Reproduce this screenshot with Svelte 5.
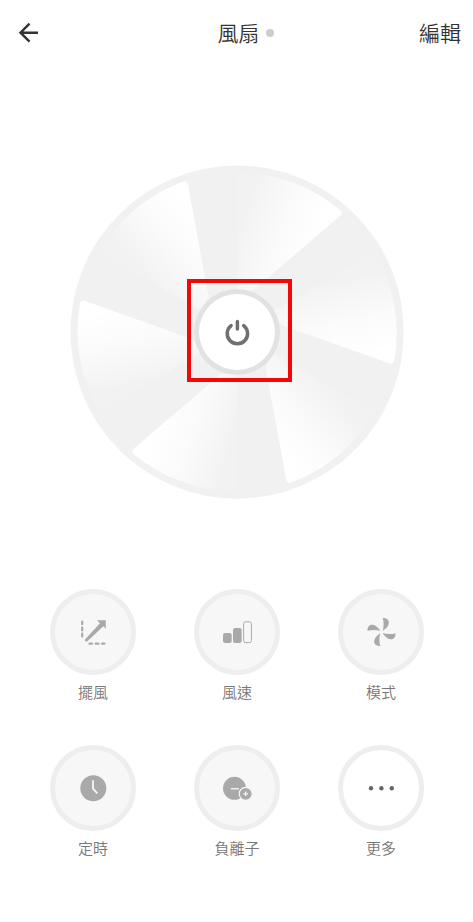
<script>
  const blades = [0, 60, 120, 180, 240, 300]

  const controls = [
    { id: 'swing', txt: '擺風' },
    { id: 'speed', txt: '風速' },
    { id: 'mode', txt: '模式' },
    { id: 'timer', txt: '定時' },
    { id: 'anion', txt: '負離子' },
    { id: 'more', txt: '更多' }
  ]
</script>


<div class="screen">
  <header>
    <button class="back" aria-label="返回">
      <svg width="24" height="24" viewBox="0 0 24 24" fill="none" stroke="#333" stroke-width="2.4">
        <path d="M22 12.700H4.500M13.500 3.700L4.500 12.700l9 9" />
      </svg>
    </button>
    <h1>風扇<span class="status"></span></h1>
    <button class="edit">編輯</button>
  </header>

  <main>
    <div class="fan">
      <svg class="disc" viewBox="-167 -167 334 334" aria-hidden="true">
        <defs>
          <linearGradient id="shine" gradientUnits="userSpaceOnUse" x1="0" y1="-100" x2="75" y2="-76">
            <stop offset="0" stop-color="#fff" stop-opacity="0.08" />
            <stop offset="0.55" stop-color="#fff" stop-opacity="0.7" />
            <stop offset="1" stop-color="#fff" />
          </linearGradient>
        </defs>
        <circle r="166.5" fill="#f1f1f1" />
        {#each blades as angle}
          <path transform="rotate({angle})" fill="url(#shine)"
            d="M0 -159A159 159 0 0 1 103 -122Q106 -120 104 -117L16 -42L0 -42Z" />
        {/each}
      </svg>
      <button class="power" aria-label="開關">
        <svg width="30" height="30" viewBox="0 0 30 30" fill="none" stroke="#707070" stroke-width="3.5" stroke-linecap="round">
          <path d="M15.400 4.500v7.500M9.100 8.600A10.200 10.200 0 1 0 21.700 8.600" />
        </svg>
      </button>
      <span class="highlight"></span>
    </div>

    <div class="controls">
      {#each controls as { id, txt }}
        <button class="control">
          <span class="ring" class:active={id === 'more'}>
            <svg width="36" height="36" viewBox="0 0 36 36" fill="#a9a9a9" aria-hidden="true">
              {#if id === 'swing'}
                <path d="M7.200 7.500v2.700M7.200 13.500v3M7.200 19.500v3M14.500 29.700h2.500M20.700 29.700h2.800M27.200 29.700h2.200" stroke="#a9a9a9" stroke-width="2.2" stroke-linecap="round" />
                <path d="M22 6.200h8.800v8.500l-2.500-2.500L12.400 27.200q-1.400.7-2.200-.2-.6-1.100.2-2L25 9.200z" />
              {:else if id === 'speed'}
                <rect x="4" y="19" width="8.7" height="10" rx="2.2" />
                <rect x="14" y="14" width="8.7" height="15" rx="2.2" />
                <rect x="24.6" y="7.8" width="7.8" height="20.8" rx="2" fill="none" stroke="#a9a9a9" />
              {:else if id === 'mode'}
                {#each [0, 90, 180, 270] as angle}
                  <path transform="rotate({angle} 18.5 18)" d="M19.700 4C24 3.800 26.200 6 25.800 9.200C25.300 12.800 22.500 14.700 19.800 17C20.800 12.500 21 8 19.700 4Z" />
                {/each}
              {:else if id === 'timer'}
                <circle cx="18.3" cy="18.3" r="13" />
                <path d="M18 10.300v8.400l4.400 4.700" fill="none" stroke="#f7f7f7" stroke-width="1.8" />
              {:else if id === 'anion'}
                <circle cx="15.5" cy="18.3" r="11.5" />
                <path d="M11.800 18.800h8.200" stroke="#f7f7f7" stroke-width="1.3" />
                <circle cx="26.7" cy="23.8" r="6.5" stroke="#f7f7f7" stroke-width="1.2" />
                <path d="M24.400 23.800h4.600M26.700 21.500v4.600" stroke="#f7f7f7" stroke-width="1.3" />
              {:else}
                <g fill="#666">
                  <circle cx="8" cy="18.3" r="2.2" />
                  <circle cx="18.4" cy="18.3" r="2.2" />
                  <circle cx="28.8" cy="18.3" r="2.2" />
                </g>
              {/if}
            </svg>
          </span>
          {txt}
        </button>
      {/each}
    </div>
  </main>
</div>


<style>

  :global(body) {
    margin: 0;
    background: #fff;
  }

  .screen {
    font-family: "Noto Sans CJK TC", sans-serif;
    color: #333;
  }

  button {
    padding: 0;
    border: 0;
    background: none;
    color: inherit;
    font: inherit;
    cursor: pointer;
  }

  header {
    display: grid;
    grid-template-columns: 1fr auto 1fr;
    align-items: center;
    height: 64px;
    padding: 0 12px 0 16px;
  }

  .back {
    justify-self: start;
    display: flex;
  }

  h1 {
    position: relative;
    margin: 0;
    font-size: 21px;
    font-weight: 350;
    line-height: 32px;
  }

  .status {
    position: absolute;
    top: 13px;
    left: 100%;
    width: 8px;
    height: 8px;
    margin-left: 6px;
    border-radius: 50%;
    background: #ccc;
  }

  .edit {
    justify-self: end;
    font-size: 21px;
    font-weight: 350;
    line-height: 32px;
  }

  main {
    padding: 101px 19px 0 20px;
  }

  .fan {
    position: relative;
    display: grid;
    place-items: center;
  }

  .disc,
  .power {
    grid-area: 1 / 1;
  }

  .disc {
    width: 77%;
  }

  .power {
    display: grid;
    place-items: center;
    box-sizing: border-box;
    width: 86px;
    height: 86px;
    border: 5px solid rgba(0, 0, 0, 0.06);
    border-radius: 50%;
    background: #fff padding-box;
    z-index: 1;
  }

  /* frame around the power button */
  .highlight {
    position: absolute;
    top: calc(50% - 53px);
    left: calc(50% - 50px);
    box-sizing: border-box;
    width: 105px;
    height: 103px;
    border: 4px solid #f20808;
    pointer-events: none;
  }

  .controls {
    display: grid;
    grid-template-columns: repeat(3, minmax(0, 144px));
    justify-content: center;
    row-gap: 42px;
    margin-top: 90px;
  }

  .control {
    display: flex;
    flex-direction: column;
    align-items: center;
    gap: 6px;
    color: #777;
    font-size: 15px;
    font-weight: 350;
    line-height: 22px;
  }

  .ring {
    display: grid;
    place-items: center;
    box-sizing: border-box;
    width: 86px;
    height: 86px;
    border: 5px solid #eee;
    border-radius: 50%;
    background: #f7f7f7;
  }

  .active {
    background: #fff;
  }

</style>
